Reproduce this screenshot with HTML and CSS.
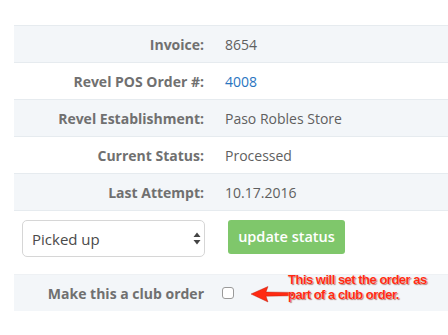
FILE: index.html
```html
<!DOCTYPE html>
<html>
<head>
<meta charset="utf-8">
<link rel="stylesheet" href="styles.css">
</head>
<body>
<div class="page">
  <table class="info">
    <tr class="odd"><th>Invoice:</th><td>8654</td></tr>
    <tr><th>Revel POS Order #:</th><td><a class="link" href="#">4008</a></td></tr>
    <tr class="odd"><th>Revel Establishment:</th><td>Paso Robles Store</td></tr>
    <tr><th>Current Status:</th><td>Processed</td></tr>
    <tr class="odd"><th>Last Attempt:</th><td>10.17.2016</td></tr>
  </table>
  <div class="actions">
    <div class="select-wrap">
      <select class="status-select">
        <option>Picked up</option>
      </select>
      <svg class="select-icon" width="8" height="13" viewBox="0 0 8 13"><path d="M4 0.5 L7.5 5 L0.5 5 Z M4 12.5 L7.5 8 L0.5 8 Z" fill="#444"/></svg>
    </div>
    <button class="btn-update">update status</button>
  </div>
  <div class="club-row">
    <span class="club-label">Make this a club order</span>
    <input type="checkbox" class="club-check">
    <svg class="arrow" width="44" height="20" viewBox="0 0 44 20">
      <path d="M0 9 L17 1.5 L15 7 L42 7.4 L42 10.8 L15 11.2 L17 17 Z" fill="#ff2a12" stroke="#b0180a" stroke-width="0.4"/>
    </svg>
    <div class="note">This will set the order as<br>part of a club order.</div>
  </div>
</div>
</body>
</html>
```

FILE: styles.css
```css
html, body {
  margin: 0;
  padding: 0;
  background: #ffffff;
}
.page {
  padding: 25px 0 0 14px;
  font-family: "Open Sans", "Liberation Sans", sans-serif;
  font-size: 14px;
}
.info {
  width: 100%;
  border-collapse: collapse;
}
.info tr {
  height: 37px;
  border-top: 1px solid #e6ebef;
}
.info tr:last-child {
  border-bottom: 1px solid #e6ebef;
}
.info tr.odd {
  background: #f3f6f9;
}
.info th {
  width: 190px;
  text-align: right;
  font-weight: 700;
  color: #707070;
  padding: 0 10px 0 0;
  white-space: nowrap;
}
.info td {
  text-align: left;
  color: #5f5f5f;
  padding: 0 0 0 11px;
}
.link {
  color: #2a75bf;
  text-decoration: none;
}
.actions {
  display: flex;
  align-items: flex-start;
  padding: 9px 0 0 8px;
  height: 54px;
}
.select-wrap {
  position: relative;
  width: 183px;
  height: 37px;
}
.status-select {
  appearance: none;
  -webkit-appearance: none;
  width: 183px;
  height: 37px;
  border: 1px solid #d6d6d6;
  border-radius: 5px;
  background: #fff;
  font-family: "Open Sans", "Liberation Sans", sans-serif;
  font-size: 15px;
  color: #4a4a4a;
  padding: 0 0 0 9px;
  margin: 0;
}
.select-icon {
  position: absolute;
  right: 4px;
  top: 12px;
  pointer-events: none;
}
.btn-update {
  margin-left: 23px;
  width: 117px;
  height: 34px;
  border: none;
  border-radius: 3px;
  background: #7fc76b;
  color: #ffffff;
  font-family: "Open Sans", "Liberation Sans", sans-serif;
  font-weight: 600;
  font-size: 14.5px;
  padding: 0 0 2px 0;
}
.club-row {
  position: relative;
  display: flex;
  align-items: center;
  height: 36px;
  background: #f3f6f9;
  border-top: 1px solid #eef1f4;
}
.club-label {
  width: 190px;
  text-align: right;
  font-weight: 700;
  color: #707070;
  font-size: 14px;
}
.club-check {
  appearance: none;
  -webkit-appearance: none;
  width: 12px;
  height: 12px;
  margin: 0 0 0 18px;
  border: 1px solid #9a9a9a;
  border-radius: 3px;
  background: #fff;
}
.arrow {
  position: absolute;
  left: 237px;
  top: 10px;
}
.note {
  position: absolute;
  left: 274px;
  top: -3px;
  font-family: "Liberation Sans", Arial, sans-serif;
  font-weight: 700;
  font-size: 13px;
  letter-spacing: -0.5px;
  line-height: 15px;
  color: #ff2a12;
  text-shadow: 0 0 1px #ffffff, 1px 1px 1px rgba(120, 20, 0, 0.55);
  white-space: nowrap;
}
```
